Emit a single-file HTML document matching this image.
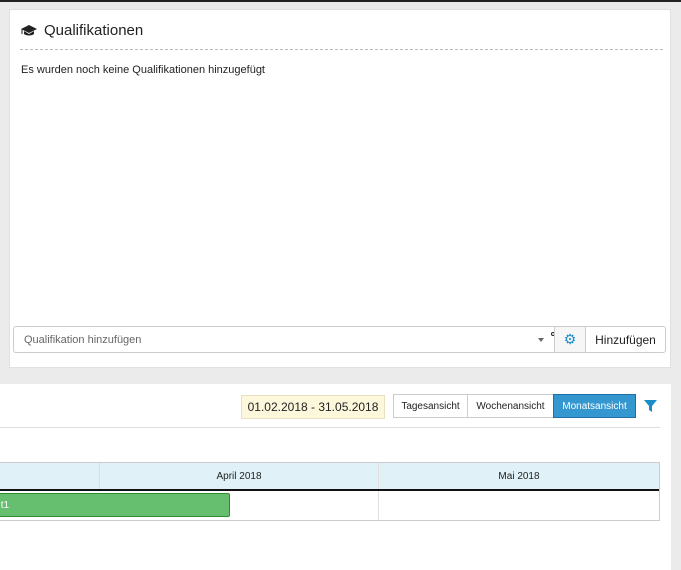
<!DOCTYPE html><html><head><meta charset="utf-8"><style>
body{margin:0;width:681px;height:570px;background:#ebebeb;font-family:"Liberation Sans",sans-serif;position:relative;overflow:hidden}
.a{position:absolute;box-sizing:border-box}
.c{display:flex;align-items:center;justify-content:center}
</style></head><body>
<div class="a" style="left:0;top:0;width:681px;height:2px;background:#222"></div>
<div class="a" style="left:9px;top:9px;width:662px;height:359px;background:#fff;border:1px solid #e0e0e0"></div>
<svg class="a" style="left:20px;top:24px" width="18" height="14" viewBox="0 0 18 14"><path d="M9 1L17 5L9 9L1 5Z" fill="#222"/><path d="M4 7v3c2 2 8 2 10 0V7L9 10Z" fill="#222"/><path d="M2 5v5" stroke="#222" stroke-width="1"/></svg>
<div class="a" style="left:44px;top:22px;font-size:15px;color:#222">Qualifikationen</div>
<div class="a" style="left:20px;top:49px;width:643px;border-top:1px dashed #bbb"></div>
<div class="a" style="left:21px;top:64px;font-size:11px;color:#222">Es wurden noch keine Qualifikationen hinzugefügt</div>
<div class="a" style="left:13px;top:326px;width:542px;height:27px;border:1px solid #ccc;border-radius:3px 0 0 3px;font-size:11px;color:#666;padding:0 10px;display:flex;align-items:center">Qualifikation hinzufügen</div>
<div class="a" style="left:538px;top:338px;border:3px solid transparent;border-top:4px solid #666"></div>
<div class="a" style="left:551px;top:332px;width:4px;height:4px;border:1px solid #222;border-radius:50%"></div>
<div class="a c" style="left:554px;top:326px;width:32px;height:27px;border:1px solid #ccc;background:#f6f6f6;color:#1a8cc8;font-size:14px">⚙</div>
<div class="a c" style="left:585px;top:326px;width:81px;height:27px;border:1px solid #ccc;border-radius:0 3px 3px 0;font-size:12px;color:#222">Hinzufügen</div>
<div class="a" style="left:0;top:384px;width:671px;height:186px;background:#fff"></div>
<div class="a c" style="left:241px;top:395px;width:144px;height:24px;background:#fdf7dc;border:1px solid #e8e0c0;font-size:12px;color:#222">01.02.2018 - 31.05.2018</div>
<div class="a c" style="left:393px;top:394px;width:75px;height:24px;border:1px solid #ccc;font-size:10px;color:#222">Tagesansicht</div>
<div class="a c" style="left:467px;top:394px;width:87px;height:24px;border:1px solid #ccc;font-size:10px;color:#222">Wochenansicht</div>
<div class="a c" style="left:553px;top:394px;width:83px;height:24px;border:1px solid #1f6fa6;background:#3597cf;font-size:10px;color:#fff">Monatsansicht</div>
<svg class="a" style="left:644px;top:400px" width="13" height="13" viewBox="0 0 13 13"><path d="M0 0H13L8 6V12L5 10V6Z" fill="#1a8cc8"/></svg>
<div class="a" style="left:0;top:427px;width:660px;height:1px;background:#ddd"></div>
<div class="a" style="left:0;top:462px;width:660px;height:59px;border:1px solid #ccc;border-left:none"></div>
<div class="a" style="left:0;top:463px;width:659px;height:26px;background:#e0f2f7"></div>
<div class="a" style="left:99px;top:463px;width:1px;height:26px;background:#d0e0e4"></div>
<div class="a" style="left:378px;top:463px;width:1px;height:57px;background:#e0e0e0"></div>
<div class="a c" style="left:100px;top:463px;width:278px;height:26px;font-size:10px;color:#222">April 2018</div>
<div class="a c" style="left:379px;top:463px;width:280px;height:26px;font-size:10px;color:#222">Mai 2018</div>
<div class="a" style="left:0;top:489px;width:659px;height:2px;background:#111"></div>
<div class="a" style="left:-3px;top:493px;width:233px;height:24px;background:#66bf6e;border:1px solid #2e8b2e;border-radius:2px;font-size:10px;color:#fff;display:flex;align-items:center">&nbsp;t1</div>
</body></html>
